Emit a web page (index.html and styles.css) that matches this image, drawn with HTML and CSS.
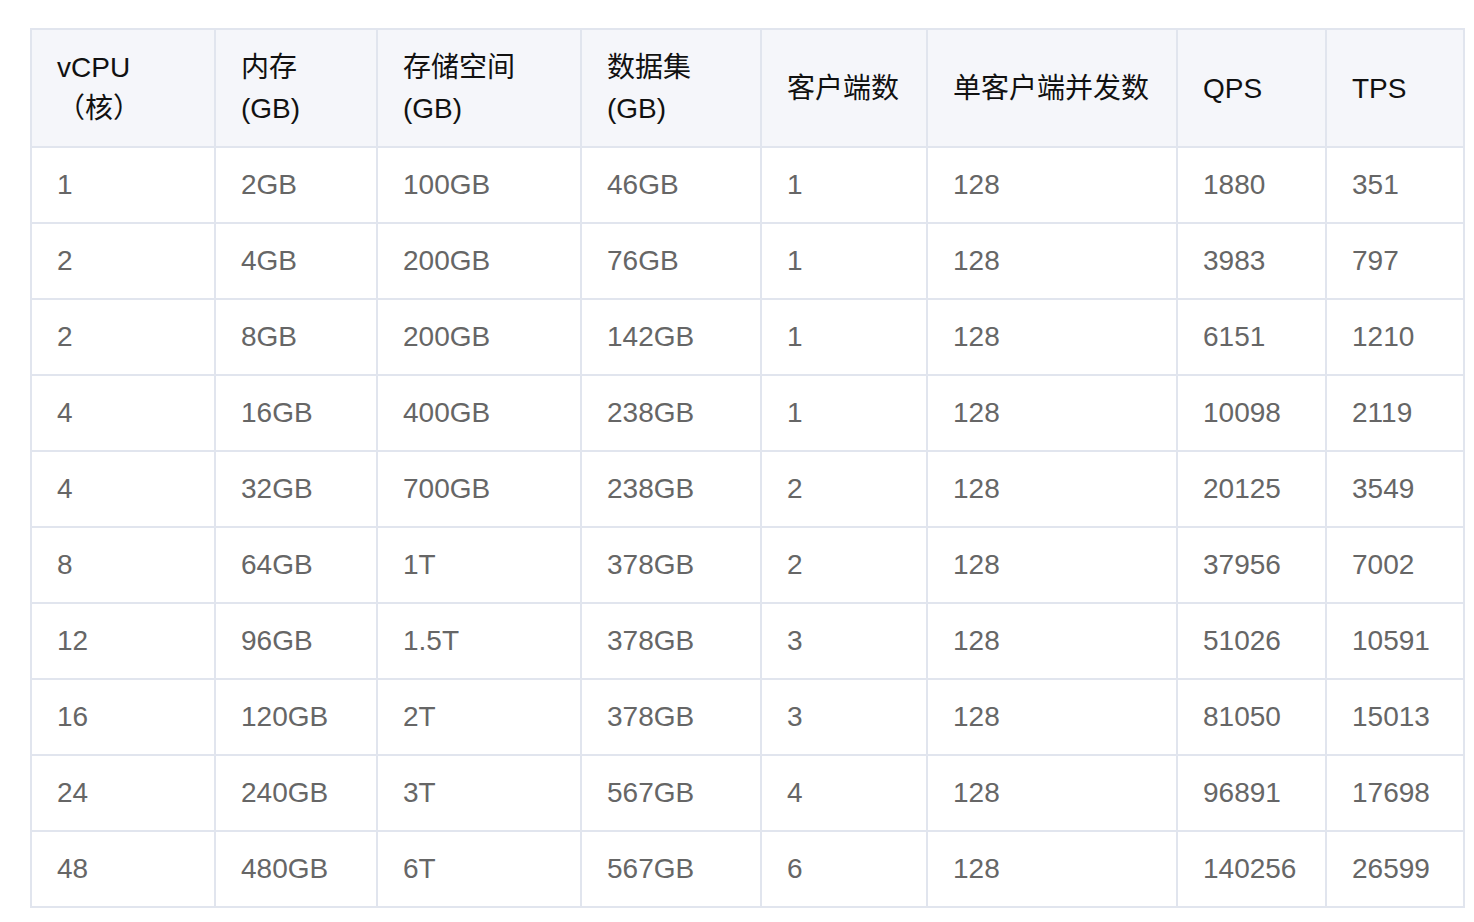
FILE: index.html
```html
<!DOCTYPE html>
<html lang="zh">
<head>
<meta charset="utf-8">
<title>规格</title>
<link rel="stylesheet" href="styles.css">
</head>
<body>
<div class="wrap">
<table class="spec">
<thead>
<tr>
<th class="c1">vCPU<br>（核）</th>
<th class="c2">内存<br>(GB)</th>
<th class="c3">存储空间<br>(GB)</th>
<th class="c4">数据集<br>(GB)</th>
<th class="c5">客户端数</th>
<th class="c6">单客户端并发数</th>
<th class="c7">QPS</th>
<th class="c8">TPS</th>
</tr>
</thead>
<tbody>
<tr><td>1</td><td>2GB</td><td>100GB</td><td>46GB</td><td>1</td><td>128</td><td>1880</td><td>351</td></tr>
<tr><td>2</td><td>4GB</td><td>200GB</td><td>76GB</td><td>1</td><td>128</td><td>3983</td><td>797</td></tr>
<tr><td>2</td><td>8GB</td><td>200GB</td><td>142GB</td><td>1</td><td>128</td><td>6151</td><td>1210</td></tr>
<tr><td>4</td><td>16GB</td><td>400GB</td><td>238GB</td><td>1</td><td>128</td><td>10098</td><td>2119</td></tr>
<tr><td>4</td><td>32GB</td><td>700GB</td><td>238GB</td><td>2</td><td>128</td><td>20125</td><td>3549</td></tr>
<tr><td>8</td><td>64GB</td><td>1T</td><td>378GB</td><td>2</td><td>128</td><td>37956</td><td>7002</td></tr>
<tr><td>12</td><td>96GB</td><td>1.5T</td><td>378GB</td><td>3</td><td>128</td><td>51026</td><td>10591</td></tr>
<tr><td>16</td><td>120GB</td><td>2T</td><td>378GB</td><td>3</td><td>128</td><td>81050</td><td>15013</td></tr>
<tr><td>24</td><td>240GB</td><td>3T</td><td>567GB</td><td>4</td><td>128</td><td>96891</td><td>17698</td></tr>
<tr><td>48</td><td>480GB</td><td>6T</td><td>567GB</td><td>6</td><td>128</td><td>140256</td><td>26599</td></tr>
</tbody>
</table>
</div>
</body>
</html>
```
FILE: styles.css
```css
html, body {
  margin: 0;
  padding: 0;
  background: #ffffff;
}
.wrap {
  padding: 28px 0 0 30px;
}
.spec {
  table-layout: fixed;
  border-collapse: separate;
  border-spacing: 0;
  width: 1435px;
  border-left: 2px solid #e1e5ee;
  border-top: 2px solid #e1e5ee;
  font-family: "Liberation Sans", "Noto Sans CJK SC", sans-serif;
  font-size: 28px;
}
.spec th,
.spec td {
  box-sizing: border-box;
  border-right: 2px solid #e1e5ee;
  border-bottom: 2px solid #e1e5ee;
  padding: 0 10px 0 25px;
  text-align: left;
  vertical-align: middle;
  white-space: nowrap;
}
.spec th {
  height: 118px;
  background: #f5f6fa;
  color: #111111;
  font-weight: normal;
  line-height: 41px;
}
.spec td {
  height: 76px;
  color: #666666;
  line-height: 32px;
}
.c1 { width: 184px; }
.c2 { width: 162px; }
.c3 { width: 204px; }
.c4 { width: 180px; }
.c5 { width: 166px; }
.c6 { width: 250px; }
.c7 { width: 149px; }
.c8 { width: 138px; }
```
